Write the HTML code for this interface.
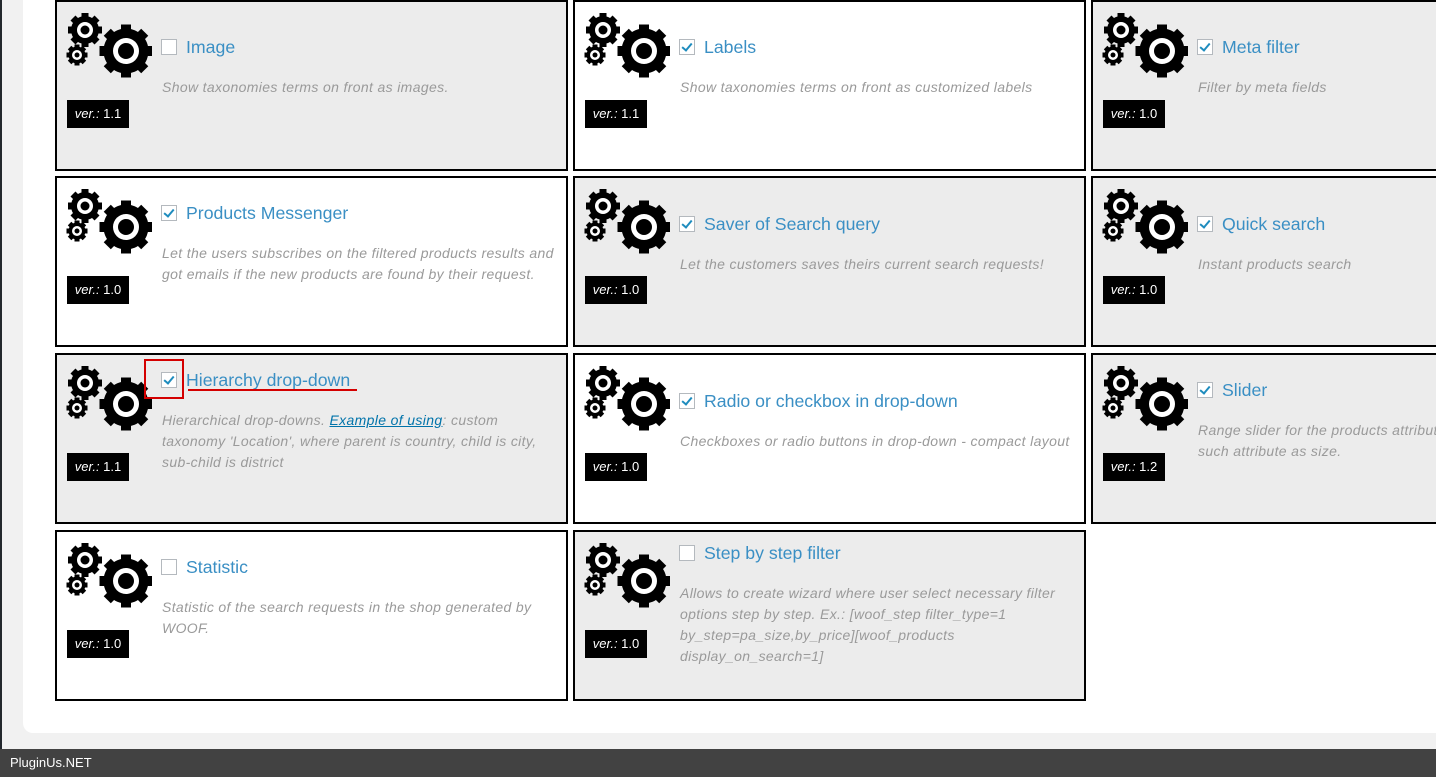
<!DOCTYPE html>
<html><head><meta charset="utf-8"><style>
*{margin:0;padding:0;box-sizing:border-box}
body{width:1436px;height:777px;overflow:hidden;background:#f1f1f1;position:relative;font-family:"Liberation Sans",sans-serif}
.strip{position:absolute;left:0;top:0;width:2px;height:749px;background:#23282d}
.panel{position:absolute;left:23px;top:-10px;width:1430px;height:743px;background:#fff;border-radius:0 0 0 10px}
.card{position:absolute;border:2px solid #000;height:171px;overflow:hidden}
.g{background:#ececec}.w{background:#fff}
.card svg{position:absolute;left:9px;top:9px}
.ver{position:absolute;left:10px;top:98px;width:62px;height:28px;background:#000;color:#fff;font-size:13px;line-height:28px;text-align:center}
.ver i{font-style:italic}
.t{position:absolute;left:104px;font-size:17.7px;color:#3a8fc4;white-space:nowrap;line-height:20px;margin-top:-1px}
.cb{display:inline-block;width:16px;height:16px;border:1px solid #b4b9be;background:#fff;vertical-align:-2px;margin-right:9px;position:relative}
.cb.on:after{content:"";position:absolute;left:4px;top:1px;width:4px;height:8px;border:solid #1e8cbe;border-width:0 2.5px 2.5px 0;transform:rotate(40deg)}
.d{position:absolute;left:105px;width:398px;font-size:14px;letter-spacing:0.35px;font-style:italic;color:#9a9a9a;line-height:21px}
.d a{color:#0073aa;text-decoration:underline}
.foot{position:absolute;left:0;top:749px;width:1436px;height:28px;background:#424242;color:#fff;font-size:13px;line-height:28px;padding-left:10px}
</style></head><body>
<div class="strip"></div>
<div class="panel"></div>
<svg width="0" height="0" style="position:absolute"><defs>
<symbol id="gear" viewBox="0 0 86 68">
<g transform="translate(60 40)" fill="#000">
<circle r="22.5"/>
<g><rect x="-5" y="-26.5" width="10" height="53"/><rect x="-5" y="-26.5" width="10" height="53" transform="rotate(45)"/><rect x="-5" y="-26.5" width="10" height="53" transform="rotate(90)"/><rect x="-5" y="-26.5" width="10" height="53" transform="rotate(135)"/></g>
<circle r="13" fill="#fff"/><circle r="8"/></g>
<g transform="translate(19 19)" fill="#000">
<circle r="14"/>
<rect x="-3.5" y="-17" width="7" height="34"/><rect x="-3.5" y="-17" width="7" height="34" transform="rotate(45)"/><rect x="-3.5" y="-17" width="7" height="34" transform="rotate(90)"/><rect x="-3.5" y="-17" width="7" height="34" transform="rotate(135)"/>
<circle r="8" fill="#fff"/><circle r="4.5"/></g>
<g transform="translate(11 44)" fill="#000">
<circle r="8.5"/>
<rect x="-2.5" y="-10.5" width="5" height="21"/><rect x="-2.5" y="-10.5" width="5" height="21" transform="rotate(45)"/><rect x="-2.5" y="-10.5" width="5" height="21" transform="rotate(90)"/><rect x="-2.5" y="-10.5" width="5" height="21" transform="rotate(135)"/>
<circle r="5" fill="#fff"/><circle r="2.5"/></g>
</symbol></defs></svg>

<div class="card g" style="left:55px;top:0;width:513px"><svg width="86" height="68"><use href="#gear"/></svg>
<div class="t" style="top:36px"><span class="cb"></span>Image</div>
<div class="d" style="top:75px">Show taxonomies terms on front as images.</div>
<div class="ver"><i>ver.:</i> 1.1</div></div>
<div class="card w" style="left:573px;top:0;width:513px"><svg width="86" height="68"><use href="#gear"/></svg>
<div class="t" style="top:36px"><span class="cb on"></span>Labels</div>
<div class="d" style="top:75px">Show taxonomies terms on front as customized labels</div>
<div class="ver"><i>ver.:</i> 1.1</div></div>
<div class="card g" style="left:1091px;top:0;width:400px"><svg width="86" height="68"><use href="#gear"/></svg>
<div class="t" style="top:36px"><span class="cb on"></span>Meta filter</div>
<div class="d" style="top:75px">Filter by meta fields</div>
<div class="ver"><i>ver.:</i> 1.0</div></div>

<div class="card w" style="left:55px;top:176px;width:513px"><svg width="86" height="68"><use href="#gear"/></svg>
<div class="t" style="top:26px"><span class="cb on"></span>Products Messenger</div>
<div class="d" style="top:65px">Let the users subscribes on the filtered products results and got emails if the new products are found by their request.</div>
<div class="ver"><i>ver.:</i> 1.0</div></div>
<div class="card g" style="left:573px;top:176px;width:513px"><svg width="86" height="68"><use href="#gear"/></svg>
<div class="t" style="top:37px"><span class="cb on"></span>Saver of Search query</div>
<div class="d" style="top:76px">Let the customers saves theirs current search requests!</div>
<div class="ver"><i>ver.:</i> 1.0</div></div>
<div class="card g" style="left:1091px;top:176px;width:400px"><svg width="86" height="68"><use href="#gear"/></svg>
<div class="t" style="top:37px"><span class="cb on"></span>Quick search</div>
<div class="d" style="top:76px">Instant products search</div>
<div class="ver"><i>ver.:</i> 1.0</div></div>

<div class="card g" style="left:55px;top:353px;width:513px"><svg width="86" height="68"><use href="#gear"/></svg>
<div class="t" style="top:16px"><span class="cb on"></span>Hierarchy drop-down</div>
<div class="d" style="top:55px">Hierarchical drop-downs. <a>Example of using</a>: custom<br>taxonomy 'Location', where parent is country, child is city,<br>sub-child is district</div>
<div class="ver"><i>ver.:</i> 1.1</div></div>
<div class="card w" style="left:573px;top:353px;width:513px"><svg width="86" height="68"><use href="#gear"/></svg>
<div class="t" style="top:37px"><span class="cb on"></span>Radio or checkbox in drop-down</div>
<div class="d" style="top:76px">Checkboxes or radio buttons in drop-down - compact layout</div>
<div class="ver"><i>ver.:</i> 1.0</div></div>
<div class="card g" style="left:1091px;top:353px;width:400px"><svg width="86" height="68"><use href="#gear"/></svg>
<div class="t" style="top:26px"><span class="cb on"></span>Slider</div>
<div class="d" style="top:65px;width:300px;white-space:nowrap">Range slider for the products attributes<br>such attribute as size.</div>
<div class="ver"><i>ver.:</i> 1.2</div></div>

<div class="card w" style="left:55px;top:530px;width:513px"><svg width="86" height="68"><use href="#gear"/></svg>
<div class="t" style="top:26px"><span class="cb"></span>Statistic</div>
<div class="d" style="top:65px">Statistic of the search requests in the shop generated by<br>WOOF.</div>
<div class="ver"><i>ver.:</i> 1.0</div></div>
<div class="card g" style="left:573px;top:530px;width:513px"><svg width="86" height="68"><use href="#gear"/></svg>
<div class="t" style="top:12px"><span class="cb"></span>Step by step filter</div>
<div class="d" style="top:51px">Allows to create wizard where user select necessary filter<br>options step by step. Ex.: [woof_step filter_type=1<br>by_step=pa_size,by_price][woof_products<br>display_on_search=1]</div>
<div class="ver"><i>ver.:</i> 1.0</div></div>

<div style="position:absolute;left:144px;top:359px;width:40px;height:40px;border:2px solid #d40000"></div>
<div style="position:absolute;left:188px;top:389px;width:169px;height:2px;background:#d40000"></div>

<div class="foot">PluginUs.NET</div>
</body></html>
